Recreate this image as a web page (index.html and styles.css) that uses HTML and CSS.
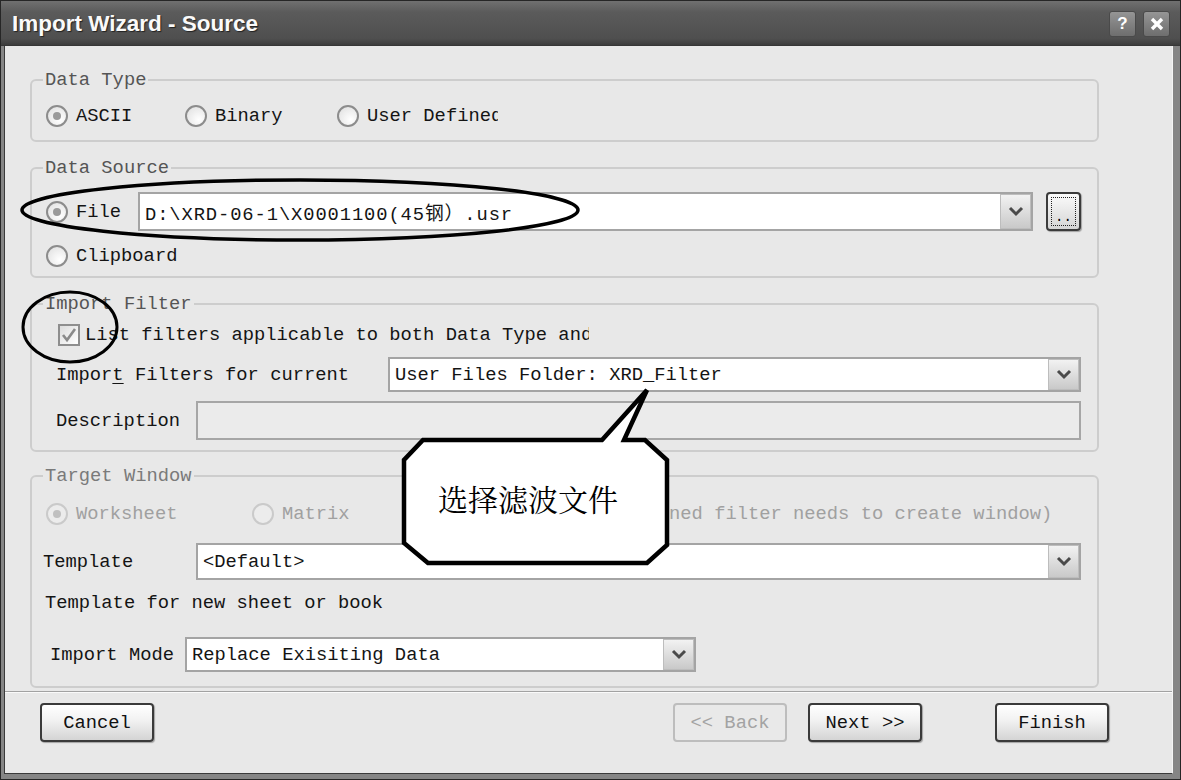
FILE: index.html
```html
<!DOCTYPE html>
<html lang="en">
<head>
  <meta charset="UTF-8">
  <title>Import Wizard - Source</title>
  <link rel="stylesheet" href="styles.css">
</head>
<body>
  <div class="window">

    <!-- Title bar -->
    <div class="titlebar">
      <span class="title">Import Wizard - Source</span>
      <div class="caption-btns">
        <span class="cap-btn">?</span>
        <span class="cap-btn">
          <svg width="16" height="16" viewBox="0 0 16 16"><path d="M3 3 L13 13 M13 3 L3 13"/></svg>
        </span>
      </div>
    </div>

    <div class="frame">
      <div class="client">
        <div class="page">

          <!-- Data Type -->
          <fieldset class="group type-group">
            <legend>Data Type</legend>
            <div class="row radio-row type-radios">
              <label class="radio"><span class="circle on"></span>ASCII</label>
              <label class="radio"><span class="circle"></span>Binary</label>
              <label class="radio clip-user"><span class="circle"></span><span class="clip">User Defined</span></label>
            </div>
          </fieldset>

          <!-- Data Source -->
          <fieldset class="group source-group">
            <legend>Data Source</legend>
            <div class="row file-row">
              <label class="radio file-radio"><span class="circle on"></span>File</label>
              <div class="combo file-combo">
                <span class="combo-text path">D:\XRD-06-1\X0001100(45钢）.usr</span>
                <span class="drop"><svg width="16" height="11" viewBox="0 0 16 11"><polyline points="2,2 8,8 14,2"/></svg></span>
              </div>
              <button class="browse"><span>..</span></button>
            </div>
            <div class="row clip-row">
              <label class="radio"><span class="circle"></span>Clipboard</label>
            </div>
          </fieldset>

          <!-- Import Filter -->
          <fieldset class="group filter-group">
            <legend>Import Filter</legend>
            <div class="row check-row">
              <span class="checkbox"><svg width="18" height="18" viewBox="0 0 18 18"><polyline points="3,9 7,14 15,3"/></svg></span>
              <span class="clip check-text">List filters applicable to both Data Type and</span>
            </div>
            <div class="row filter-row">
              <span class="lbl lbl-filter">Impor<u>t</u> Filters for current</span>
              <div class="combo grow">
                <span class="combo-text">User Files Folder: XRD_Filter</span>
                <span class="drop"><svg width="16" height="11" viewBox="0 0 16 11"><polyline points="2,2 8,8 14,2"/></svg></span>
              </div>
            </div>
            <div class="row desc-row">
              <span class="lbl lbl-desc">Description</span>
              <div class="field disabled grow"></div>
            </div>
          </fieldset>

          <!-- Target Window -->
          <fieldset class="group target-group">
            <legend class="dim">Target Window</legend>
            <div class="row radio-row target-radios">
              <label class="radio off"><span class="circle on"></span>Worksheet</label>
              <label class="radio off"><span class="circle"></span>Matrix</label>
              <label class="radio off"><span class="circle"></span>None (User defined filter needs to create window)</label>
            </div>
            <div class="row template-row">
              <span class="lbl lbl-template">Template</span>
              <div class="combo grow">
                <span class="combo-text">&lt;Default&gt;</span>
                <span class="drop"><svg width="16" height="11" viewBox="0 0 16 11"><polyline points="2,2 8,8 14,2"/></svg></span>
              </div>
            </div>
            <div class="row note-row">Template for new sheet or book</div>
            <div class="row mode-row">
              <span class="lbl lbl-mode">Import Mode</span>
              <div class="combo mode-combo">
                <span class="combo-text">Replace Exisiting Data</span>
                <span class="drop"><svg width="16" height="11" viewBox="0 0 16 11"><polyline points="2,2 8,8 14,2"/></svg></span>
              </div>
            </div>
          </fieldset>
        </div>

        <div class="separator"></div>

        <!-- Wizard buttons -->
        <div class="buttons">
          <button class="btn">Cancel</button>
          <span class="spacer"></span>
          <button class="btn disabled">&lt;&lt; Back</button>
          <button class="btn next">Next &gt;&gt;</button>
          <button class="btn finish">Finish</button>
        </div>
      </div>
    </div>

    <!-- hand-drawn annotations over the dialog -->
    <svg class="marks" width="1181" height="780" viewBox="0 0 1181 780">
      <ellipse class="ink" cx="300" cy="210" rx="278" ry="30"/>
      <ellipse class="ink thin" cx="70" cy="327" rx="47" ry="35"/>
      <path class="bubble" d="M423 440 L602 440 L647 390 L624 440 L645 440 L667 460 L667 545 L647 563 L428 563 L404 543 L404 460 Z"/>
    </svg>
    <div class="callout-text">选择滤波文件</div>
  </div>
</body>
</html>
```

FILE: styles.css
```css
* {
  box-sizing: border-box;
}

body {
  margin: 0;
  background: #2b2b2b;
}

.window {
  position: relative;
  width: 1181px;
  height: 780px;
  display: flex;
  flex-direction: column;
  border: 1px solid #262626;
  font-family: "Liberation Mono", "Noto Sans CJK SC", monospace;
  font-size: 18.8px;
  color: #141414;
}

/* Title bar */
.titlebar {
  height: 45px;
  display: flex;
  align-items: center;
  justify-content: space-between;
  padding: 2px 10px 0 11px;
  background: linear-gradient(#707070, #5b5b5b 25%, #4f4f4f 85%, #3c3c3c);
  border-bottom: 1px solid #363636;
}

.title {
  font-family: "Liberation Sans", Arial, sans-serif;
  font-weight: bold;
  font-size: 22.5px;
  color: #fafafa;
  text-shadow: 1px 1px 1px #222;
}

.caption-btns {
  display: flex;
  gap: 7px;
}

.cap-btn {
  width: 27px;
  height: 26px;
  display: flex;
  align-items: center;
  justify-content: center;
  border: 1px solid #4a4a4a;
  border-radius: 3px;
  background: linear-gradient(#959595, #6e6e6e);
  color: #fff;
  font-family: "Liberation Sans", Arial, sans-serif;
  font-weight: bold;
  font-size: 17px;
}

.cap-btn path {
  stroke: #fff;
  stroke-width: 3.4;
  fill: none;
}

/* Frame around the client area */
.frame {
  flex: 1;
  padding: 0 7px 5px 3px;
  background: #858585;
}

.client {
  height: 100%;
  display: flex;
  flex-direction: column;
  background: #e8e8e8;
  border-left: 1px solid #3a3a3a;
  border-right: 1px solid #f4f4f4;
  border-bottom: 1px solid #3a3a3a;
}

.page {
  padding: 24px 73px 0 25px;
}

/* Group boxes */
.group {
  margin: 0 0 16px;
  padding: 0 16px 10px 11px;
  min-width: 0;
  border: 2px solid #cdcdcd;
  border-radius: 6px;
}

.group legend {
  padding: 0 2px;
  line-height: 20px;
  color: #555;
}

.group legend.dim {
  color: #7a7a7a;
}

.source-group {
  padding-bottom: 6px;
}

.filter-group {
  margin-bottom: 14px;
}

.target-group {
  margin-bottom: 0;
  padding-bottom: 14px;
}

.row {
  display: flex;
  align-items: center;
  white-space: nowrap;
}

.grow {
  flex: 1;
}

/* Radios */
.radio-row {
  display: grid;
  height: 28px;
}

.type-radios {
  margin-top: 12px;
  grid-template-columns: 142px 152px auto;
}

.target-radios {
  margin-top: 14px;
  grid-template-columns: 209px 218px auto;
}

.radio {
  display: flex;
  align-items: center;
  gap: 8px;
  margin-left: 3px;
}

.radio + .radio {
  margin-left: 0;
}

.circle {
  width: 22px;
  height: 22px;
  flex: none;
  display: flex;
  align-items: center;
  justify-content: center;
  border: 2px solid #8c8c8c;
  border-radius: 50%;
  background: radial-gradient(circle at 65% 70%, #ffffff, #dedede);
}

.circle.on::after {
  content: "";
  width: 8px;
  height: 8px;
  border-radius: 50%;
  background: #9a9a9a;
}

.radio.off {
  color: #a0a0a0;
}

.radio.off .circle {
  border-color: #cacaca;
  background: #ececec;
}

.radio.off .circle.on::after {
  background: #c0c0c0;
}

.clip {
  overflow: hidden;
}

.clip-user .clip {
  width: 131px;
}

/* Data Source */
.file-row {
  margin-top: 14px;
  height: 39px;
}

.file-radio {
  width: 92px;
  flex: none;
}

.file-combo {
  flex: 1;
}

.path {
  letter-spacing: 0.9px;
}

.browse {
  width: 35px;
  height: 39px;
  margin-left: 13px;
  padding: 3px;
  border: 2px solid #3b3b3b;
  border-radius: 4px;
  background: linear-gradient(#fbfbfb, #d5d5d5);
  box-shadow: 1px 1px 1px rgba(0, 0, 0, 0.3);
  font: inherit;
}

.browse span {
  display: flex;
  align-items: flex-end;
  justify-content: center;
  height: 100%;
  border: 1px dotted #222;
  font-size: 14px;
  line-height: 16px;
}

.clip-row {
  margin-top: 11px;
  height: 28px;
}

/* Import Filter */
.check-row {
  margin-top: 7px;
  height: 28px;
  padding-left: 15px;
}

.checkbox {
  width: 22px;
  height: 22px;
  flex: none;
  margin-right: 5px;
  display: flex;
  align-items: center;
  justify-content: center;
  border: 2px solid #8e8e8e;
  background: linear-gradient(135deg, #dcdcdc, #ffffff);
}

.checkbox polyline {
  fill: none;
  stroke: #8a8a8a;
  stroke-width: 2.6;
}

.check-text {
  width: 504px;
}

.filter-row {
  margin-top: 8px;
  height: 35px;
}

.desc-row {
  margin-top: 9px;
  height: 39px;
}

.lbl {
  flex: none;
}

.lbl-filter {
  margin-left: 13px;
  width: 332px;
}

.lbl-filter u {
  text-underline-offset: 3px;
}

.lbl-desc {
  margin-left: 13px;
  width: 140px;
}

.lbl-template {
  width: 153px;
}

.lbl-mode {
  margin-left: 7px;
  width: 135px;
}

/* Combo boxes and fields */
.combo {
  display: flex;
  align-self: stretch;
  background: #fff;
  border: 2px solid #a4a4a4;
}

.combo-text {
  flex: 1;
  padding-left: 5px;
  overflow: hidden;
  display: flex;
  align-items: center;
}

.drop {
  width: 31px;
  flex: none;
  display: flex;
  align-items: center;
  justify-content: center;
  border: 1px solid #bdbdbd;
  background: linear-gradient(#f2f2f2, #c9c9c9);
}

.drop polyline {
  fill: none;
  stroke: #4a4a4a;
  stroke-width: 3;
}

.field {
  align-self: stretch;
  border: 2px solid #a6a6a6;
  background: #fff;
}

.field.disabled {
  background: #ebebeb;
}

/* Target Window */
.template-row {
  margin-top: 15px;
  height: 37px;
}

.note-row {
  margin-top: 10px;
  margin-left: 2px;
  height: 26px;
}

.mode-row {
  margin-top: 21px;
  height: 35px;
}

.mode-combo {
  width: 511px;
}

/* Bottom buttons */
.separator {
  margin-top: 3px;
  height: 2px;
  border-top: 1px solid #a2a2a2;
  border-bottom: 1px solid #fafafa;
}

.buttons {
  display: flex;
  margin-top: 10px;
  padding: 0 63px 0 35px;
}

.spacer {
  flex: 1;
}

.btn {
  width: 114px;
  height: 39px;
  border: 2px solid #3a3a3a;
  border-radius: 4px;
  background: linear-gradient(#ffffff, #f1f1f1 45%, #d4d4d4);
  box-shadow: 1px 1px 1px rgba(0, 0, 0, 0.3);
  font: inherit;
  color: #111;
  padding: 0;
}

.btn.disabled {
  border-color: #bdbdbd;
  background: #e9e9e9;
  color: #a3a3a3;
  box-shadow: none;
}

.btn.next {
  margin-left: 21px;
}

.btn.finish {
  margin-left: 73px;
}

/* Annotations */
.marks {
  position: absolute;
  top: -1px;
  left: -1px;
  pointer-events: none;
}

.ink {
  fill: none;
  stroke: #000;
  stroke-width: 3.5;
}

.ink.thin {
  stroke-width: 3;
}

.bubble {
  fill: #fff;
  stroke: #000;
  stroke-width: 4.5;
  stroke-linejoin: miter;
}

.callout-text {
  position: absolute;
  top: 482px;
  left: 437px;
  font-family: "Noto Serif CJK SC", "Noto Sans CJK SC", serif;
  font-size: 30px;
  line-height: 30px;
  color: #000;
}
```
